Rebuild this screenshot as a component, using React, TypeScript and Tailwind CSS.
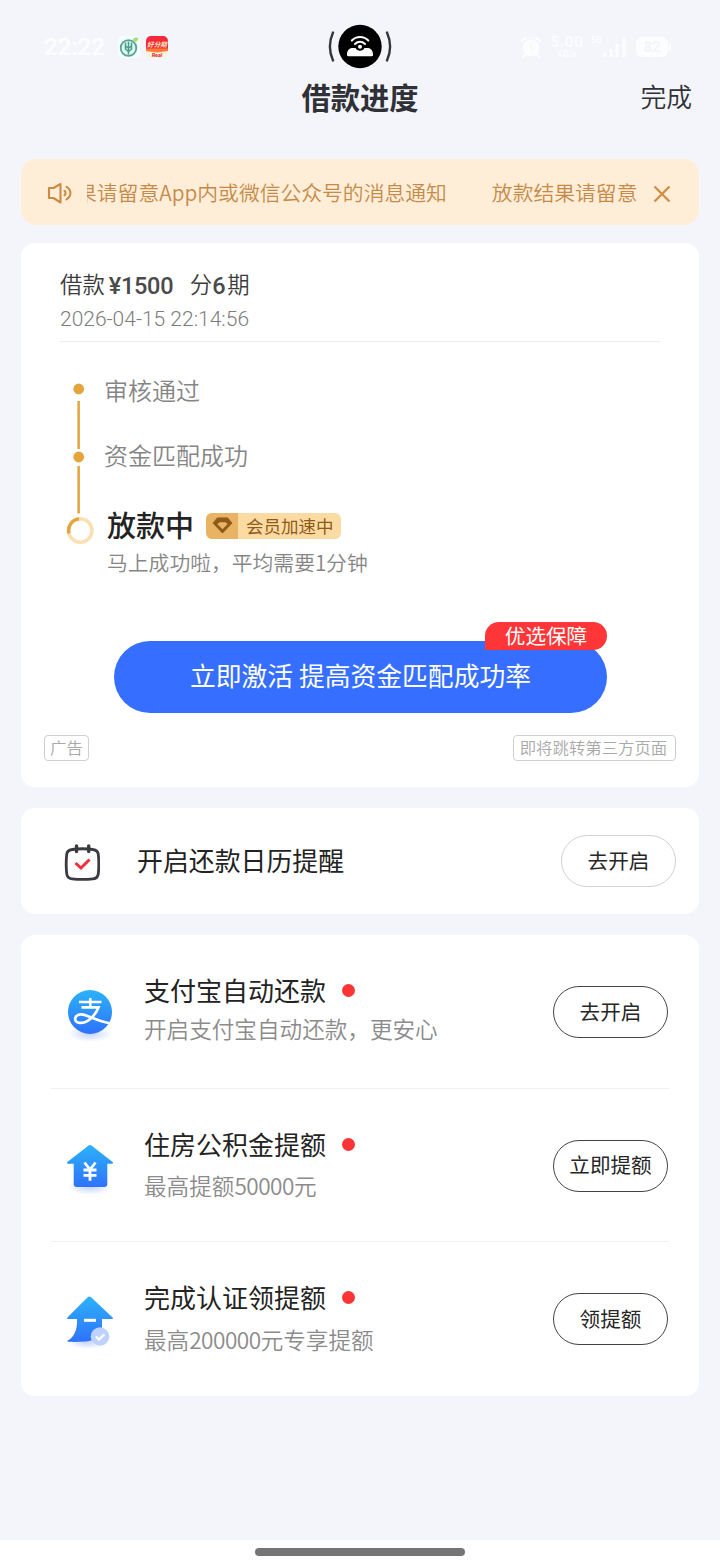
import { ReactNode } from 'react';
import clsx from 'clsx';

type RowProps = { icon: ReactNode; title: string; desc: ReactNode; action: string; descClass: string; }

const StatusBar = () => (
    <div className="flex h-[76px] items-start">
        <div className="flex w-[328px] items-center pl-11 pt-[34px]">
            <span className="w-[74px] font-['Roboto'] text-[24px] font-medium leading-[26px] text-white/80">22:22</span>
            <svg className="h-[22px] w-[22px]" viewBox="0 0 22 22">
                <rect width="22" height="22" rx="5" fill="#f5fffd" />
                <circle cx="10.5" cy="12" r="7.8" fill="#dff7f0" stroke="#55a394" strokeWidth="1.8" />
                <path d="M10.5 5.5v13M7.5 6.5v6.5l3 2.5 3-2.5V6.5M7.5 10l3 2 3-2" fill="none" stroke="#4a9d8c" strokeWidth="1.5" />
                <path d="M14.5 3.5c2-2.5 4-2.5 6-1.5-.5 2.5-2 4-4.5 4z" fill="#a5dc7c" />
            </svg>
            <svg className="ml-[6px] h-[22px] w-[22px]" viewBox="0 0 22 22">
                <rect width="22" height="22" rx="5" fill="#fff2dc" />
                <path d="M0 5a5 5 0 0 1 5-5h12a5 5 0 0 1 5 5v8H0z" fill="#f5283c" />
                <path d="M0 12.5h22v2.500l-11 1.500-11-1.500z" fill="#ff7a36" />
                <text x="11" y="11.3" textAnchor="middle" fontSize="6.6" fontWeight="700" fontStyle="italic" fill="#ffe9b8" fontFamily="Noto Sans CJK SC, sans-serif">好分期</text>
                <text x="11" y="20.8" textAnchor="middle" fontSize="5.500" fontWeight="700" fontStyle="italic" fill="#dd2030" fontFamily="Roboto, sans-serif">Real</text>
            </svg>
        </div>
        <svg className="mt-[24px] h-[46px] w-16" viewBox="0 0 64 46">
            <path d="M5 8.5c-4 9-4 19 0 28M59 8.5c4 9 4 19 0 28" fill="none" stroke="#34353a" strokeWidth="2.4" strokeLinecap="round" />
            <circle cx="32" cy="22.5" r="21.7" fill="#000" />
            <path d="M19 31c0-4 1.5-6.5 5-7h3.5c1 1.8 2.5 2.8 4.5 2.8s3.5-1 4.5-2.8H40c3.5.5 5 3 5 7 0 .8-.5 1.2-1.2 1.2H20.200c-.8 0-1.2-.4-1.2-1.2z" fill="#fff" />
            <path d="M23.8 16.5c4.5-4.7 12-4.7 16.500 0M27 20c3-2.900 7-2.900 10 0" fill="none" stroke="#fff" strokeWidth="2" strokeLinecap="round" />
            <circle cx="32" cy="22.8" r="2" fill="#fff" />
        </svg>
        <div className="flex flex-1 items-center pl-[128px] pt-[35px] font-['Roboto'] text-white opacity-80">
            <svg className="h-[22px] w-[22px]" viewBox="0 0 22 22">
                <circle cx="11" cy="12" r="8.5" fill="#fff" />
                <path d="M2 5l4-3.500M20 5l-4-3.500M5 19l-2 2M17 19l2 2" stroke="#fff" strokeWidth="2.2" strokeLinecap="round" />
                <path d="M11 7.5V12l3 2" fill="none" stroke="#f4f5fb" strokeWidth="1.3" />
            </svg>
            <div className="ml-[7px] flex w-[36px] flex-col items-center font-medium">
                <span className="text-[15px] leading-[13px] tracking-[0.8px]">5.00</span>
                <span className="text-[9px] leading-[10px]">KB/s</span>
            </div>
            <svg className="ml-[6px] h-6 w-9" viewBox="0 0 36 24">
                <text x="0" y="8" fontSize="9" fontWeight="700" fill="#fff">5G</text>
                <path d="M14 22v-4M20 22v-8M26 22V9M33 22V3" stroke="#fff" strokeWidth="3" />
            </svg>
            <span className="ml-[9px] h-5 w-8 rounded-md bg-white text-center text-[15px] font-bold leading-5 text-[#f4f5fb]">82</span>
            <span className="ml-px h-2 w-0.5 rounded bg-white" />
        </div>
    </div>
);

const Notice = () => (
    <div className="mt-[33px] mx-[21px] flex h-[66px] items-center rounded-[15px] bg-[#feeed8] pl-[26px] text-[#c68a48]">
        <svg className="mt-0.5 h-6 w-[26px]" viewBox="0 0 26 24" fill="none" stroke="#cb8b45" strokeWidth="2.1" strokeLinejoin="round" strokeLinecap="round">
            <path d="M2 7h4.5L13.500 3v18.500l-7-4.500H2z" />
            <path d="M17.500 9.800c1.400 1.200 1.400 3.200 0 4.400M19.500 5.800c5.200 3 5.200 9.600 0 12.600" />
        </svg>
        <div className="ml-[14px] flex w-[551px] overflow-hidden whitespace-nowrap text-[20.8px] font-[350] leading-8">
            <span className="-ml-[11px]">果请留意App内或微信公众号的消息通知</span>
            <span className="ml-[45px]">放款结果请留意</span>
        </div>
        <svg className="ml-[14px] mt-[3px] h-5 w-5" viewBox="0 0 20 20">
            <path d="M2.5 2.5l15 15M17.5 2.5l-15 15" stroke="#cf8f47" strokeWidth="2.4" />
        </svg>
    </div>
);

const Progress = () => (
    <div className="mx-[21px] mt-[18px] h-[544px] rounded-[14px] bg-white">
        <div className="mx-[39px] h-[99px] border-b border-[#ececec] pt-[26px]">
            <div className="flex h-7 items-center text-[22.4px] font-[350] leading-7 text-[#3c3c3c]">
                <span>借款</span>
                <span className="ml-1 mt-[6px] w-[81px] font-['Roboto'] text-[23.5px] font-medium tracking-[-0.3px] text-[#4a4a4a]">¥1500</span>
                <span>分</span>
                <span className="mt-[6px] w-[15px] font-['Roboto'] text-[23.5px] font-medium text-[#4a4a4a]">6</span>
                <span>期</span>
            </div>
            <p className="mt-[10px] font-['Roboto'] text-[21px] font-light leading-6 text-[#7c7c7c]">2026-04-15 22:14:56</p>
        </div>
        <div className="flex">
            <svg className="ml-[45px] mt-[38px] h-[166px] w-7" viewBox="0 0 28 166">
                <g fill="#e3a53c">
                    <circle cx="12.7" cy="9" r="5.4" />
                    <rect x="11.4" y="21" width="2.5" height="48" />
                    <circle cx="12.7" cy="77" r="5.4" />
                    <rect x="11.4" y="86" width="2.5" height="47.5" />
                </g>
                <circle cx="14.3" cy="150.5" r="11.7" fill="none" stroke="#fbdfb1" strokeWidth="3.4" />
                <path d="M3 153.5a11.7 11.7 0 0 1 10-14.6" fill="none" stroke="#e3a53c" strokeWidth="3.4" />
            </svg>
            <div className="pl-[10px] pt-8 text-[#858585]">
                <p className="text-[24px] font-[350] leading-8">审核通过</p>
                <p className="mt-[33px] text-[24px] font-[350] leading-8">资金匹配成功</p>
                <div className="ml-[3px] mt-[35px] flex h-9 items-center">
                    <span className="w-[99px] text-[29px] font-medium leading-9 text-[#232323]">放款中</span>
                    <div className="mt-[3px] flex h-[26px] overflow-hidden rounded-[6px] bg-[#fcdba2] text-[#8e5a1a]">
                        <div className="flex w-8 items-center justify-center bg-[#e8b463]">
                            <svg className="h-[17px] w-[21px]" viewBox="0 0 22 18">
                                <path d="M5.5 1h11L21 6.500 11 17 1 6.500z" fill="#8e5a1a" stroke="#8e5a1a" strokeLinejoin="round" />
                                <path d="M8 5.500h6l2.500 2-5.500 5.500-5.500-5.500z" fill="#e8b463" />
                            </svg>
                        </div>
                        <span className="w-[103px] pl-2 text-[17.5px] leading-[25px]">会员加速中</span>
                    </div>
                </div>
                <p className="ml-[3px] mt-1 text-[20.8px] font-[350] leading-8">马上成功啦，平均需要<span className="tracking-[-0.3px]">1</span>分钟</p>
            </div>
        </div>
        <button className="relative mx-[93px] mt-[63px] block h-[72px] w-[493px] rounded-full bg-[#366fff] pb-1 text-[25.8px] leading-9 text-white">
            立即激活 提高资金匹配成功率
            <span className="absolute -top-[19px] right-0 h-7 w-[122px] rounded-[14px] rounded-bl-none bg-[#ff3638] text-[20.6px] leading-[26px]">优选保障</span>
        </button>
        <div className="ml-[23px] mr-[23px] mt-[22px] flex justify-between text-[16.4px] font-[350] leading-[23px] text-[#a9a9a9]">
            <span className="h-[26px] w-[45px] rounded-[4px] border border-[#cfcfcf] text-center">广告</span>
            <span className="h-[26px] w-[163px] rounded-[4px] border border-[#cfcfcf] pr-0.5 text-center">即将跳转第三方页面</span>
        </div>
    </div>
);

const PillButton = ({ label, dark }: { label: string, dark?: boolean }) => (
    <button className={clsx('h-[52px] w-[115px] rounded-full border pb-[3px] text-[20.6px] leading-8 text-[#262626]', dark ? 'border-[#444444]' : 'border-[#d2d2d2]')}>
        {label}
    </button>
);

const CalendarCard = () => (
    <div className="mx-[21px] mt-[21px] flex h-[106px] items-center rounded-[14px] bg-white pl-[43px] pr-[23px]">
        <svg className="mt-[3px] h-[38px] w-9" viewBox="0 0 36 38" fill="none">
            <path d="M8 5.5C15 4.500 22 4.500 29 5.500c3.500.4 5 1.800 5.300 5 .7 6.500.7 12.500 0 19-.3 3.500-1.800 5-5.300 5.300-7 .7-14 .7-21 0-3.500-.3-5-1.800-5.300-5.300-.7-6.500-.7-12.500 0-19 .3-3.200 1.800-4.600 5.300-5z" stroke="#3a3a40" strokeWidth="2.8" />
            <path d="M12.5 2v5.500M24.7 2v5.500" stroke="#3a3a40" strokeWidth="3.4" strokeLinecap="round" />
            <path d="M11.500 19l5.500 5 8.500-8.500" stroke="#f03038" strokeWidth="3" />
        </svg>
        <span className="ml-[37px] flex-1 pb-0.5 text-[25.9px] leading-9 text-[#232323]">开启还款日历提醒</span>
        <PillButton label="去开启" />
    </div>
);

const BlueGradient = ({ id }: { id: string }) => (
    <defs>
        <linearGradient id={id} x1="0" y1="0" x2="0" y2="1">
            <stop offset="0" stopColor="#2cb2fa" />
            <stop offset="1" stopColor="#2f72fb" />
        </linearGradient>
        <radialGradient id={`${id}-shadow`}>
            <stop offset="0" stopColor="#9db8fb" stopOpacity="0.6" />
            <stop offset="1" stopColor="#9db8fb" stopOpacity="0" />
        </radialGradient>
    </defs>
);

const AlipayIcon = () => (
    <svg className="h-14 w-[50px]" viewBox="0 0 50 56">
        <BlueGradient id="alipay" />
        <ellipse cx="25" cy="46" rx="22" ry="8" fill="url(#alipay-shadow)" />
        <circle cx="25" cy="24" r="22" fill="url(#alipay)" />
        <g fill="none" stroke="#fff">
            <path d="M14 14h22.500M25.300 10v9.500" strokeWidth="2.500" />
            <path d="M16.500 19.300h17c-2 5.500-5.500 10-10.800 13.500-5 3-12 2.800-12.500-1.500-.3-4 4.500-6 9.500-4.300 7 2.300 14 6.300 26 8.500" strokeWidth="2.700" />
        </g>
    </svg>
);

const HouseIcon = () => (
    <svg className="-mt-px h-14 w-[50px]" viewBox="0 0 50 56">
        <BlueGradient id="house" />
        <ellipse cx="25" cy="46" rx="22" ry="8" fill="url(#house-shadow)" />
        <path d="M23.2 4.8a2.7 2.7 0 0 1 3.600 0L47.600 21c.8.7.5 1.700-.6 1.700h-4.700V43a3 3 0 0 1-3 3H11.700a3 3 0 0 1-3-3V22.700H3c-1.100 0-1.400-1-.6-1.700z" fill="url(#house)" />
        <path d="M19.500 21.500l5.500 7 5.500-7M18.500 29h13M18.500 34.300h13M25 28.500v11.200" fill="none" stroke="#fff" strokeWidth="2.800" />
    </svg>
);

const CertifyIcon = () => (
    <svg className="-mt-px h-14 w-[50px]" viewBox="0 0 50 56">
        <BlueGradient id="certify" />
        <ellipse cx="22" cy="48" rx="20" ry="7" fill="url(#certify-shadow)" />
        <path d="M22.7 3.300a2.500 2.500 0 0 1 3.400 0L47.600 23.500c.8.7.5 1.500-.6 1.500H37v9c-1 8-7 13-16 13.500-6 .4-12 .5-17.500.3-1.300 0-1.500-1-.4-1.500C9 43 12.500 36 12 25H3c-1.100 0-1.400-.8-.6-1.500z" fill="url(#certify)" />
        <path d="M19 26.300h12" stroke="#fff" strokeWidth="3" />
        <circle cx="35" cy="42.500" r="9.300" fill="#bdd2fc" />
        <path d="M31 42.500l3 3 5.300-5.300" fill="none" stroke="#fff" strokeWidth="2.300" />
    </svg>
);

const ServiceRow = ({ icon, title, desc, action, descClass }: RowProps) => (
    <div className="mx-[30px] flex h-[153.6px] border-b border-[#f1f1f1] last:border-b-0">
        <div className="ml-[14px] mt-[53px]">{icon}</div>
        <div className="ml-[29px] mt-[37px] flex-1">
            <div className="flex items-center">
                <span className="text-[26px] leading-9 text-[#232323]">{title}</span>
                <span className="ml-[16px] mt-px h-[13px] w-[13px] rounded-full bg-[#fb3535]" />
            </div>
            <p className={clsx('text-[22.6px] font-[350] leading-8 text-[#8b8b8b]', descClass)}>{desc}</p>
        </div>
        <div className="mt-[51px] mr-px"><PillButton label={action} dark /></div>
    </div>
);

const rows: RowProps[] = [
    { icon: <AlipayIcon />, title: '支付宝自动还款', desc: '开启支付宝自动还款，更安心', action: '去开启', descClass: 'mt-[5px]' },
    { icon: <HouseIcon />, title: '住房公积金提额', desc: <>最高提额<span className="tracking-[-0.5px]">50000</span>元</>, action: '立即提额', descClass: 'mt-[8px]' },
    { icon: <CertifyIcon />, title: '完成认证领提额', desc: <>最高<span className="tracking-[-0.5px]">200000</span>元专享提额</>, action: '领提额', descClass: 'mt-[9px]' },
];

export default function App() {
    return (
        <div className="flex h-[1568px] w-[720px] flex-col overflow-hidden bg-[#f4f5fb] font-['Noto_Sans_CJK_SC',sans-serif]">
            <StatusBar />
            <div className="grid h-[50px] grid-cols-[1fr_auto_1fr] items-start text-[#303136]">
                <h1 className="col-start-2 text-[29.3px] font-bold leading-10">借款进度</h1>
                <button className="mr-7 justify-self-end text-[25.8px] font-[350] leading-10">完成</button>
            </div>
            <Notice />
            <Progress />
            <CalendarCard />
            <div className="mx-[21px] mt-[21px] rounded-[14px] bg-white">
                {rows.map((row) => <ServiceRow key={row.title} {...row} />)}
            </div>
            <div className="mt-auto flex h-7 justify-center bg-white pt-2">
                <div className="h-2 w-[210px] rounded-full bg-[#757575]" />
            </div>
        </div>
    );
}
